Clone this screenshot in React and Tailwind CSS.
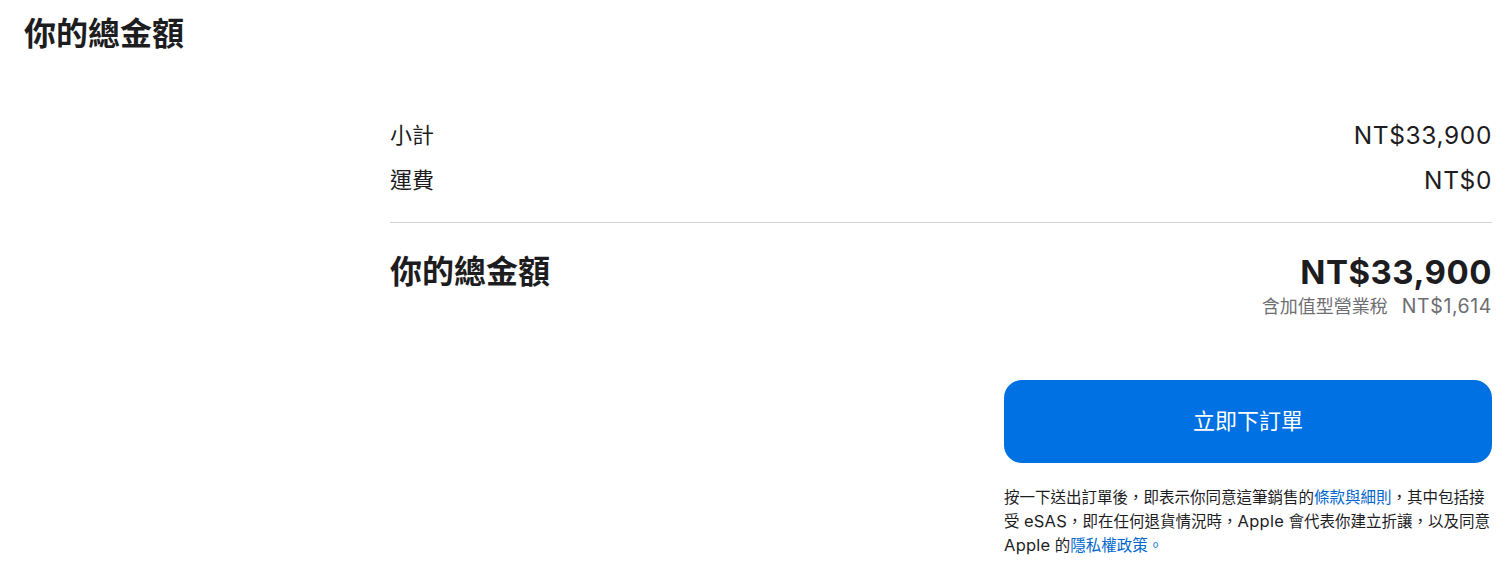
const font = "font-['Inter','Noto_Sans_CJK_TC',sans-serif]";

// Latin runs sit a little larger and looser than the CJK text around them
function Latin({ children }) {
	return (
		<span className="text-[16.5px] leading-[16px] tracking-[0.015em]">
			{children}
		</span>
	);
}

function SummaryRow({ label, value }) {
	return (
		<div className="flex items-center justify-between h-[45px]">
			<span className="text-[22px]">{label}</span>
			<span className="text-[24.5px] tracking-[0.025em]">{value}</span>
		</div>
	);
}

export default function App() {
	return (
		<div
			className={`${font} h-[568px] overflow-hidden bg-white pl-[24px] pr-[20px] text-[#1d1d1f]`}
		>
			<h2 className="pt-[14px] text-[32px] font-bold leading-[40px]">
				你的總金額
			</h2>

			<div className="grid grid-cols-[366px_1fr]">
				<div />
				<div className="mt-[59px]">
					<SummaryRow label="小計" value="NT$33,900" />
					<SummaryRow label="運費" value="NT$0" />

					<div className="mt-[19px] border-t border-[#d2d2d7]" />

					<div className="flex items-start justify-between pt-[29px]">
						<span className="text-[32px] font-bold leading-[40px]">
							你的總金額
						</span>
						<div className="flex flex-col items-end">
							<span className="text-[33px] font-bold leading-[40px] tracking-[0.015em]">
								NT$33,900
							</span>
							<span className="mt-[2px] text-[18px] leading-[24px] text-[#6e6e73]">
								含加值型營業稅
								<span className="ml-[14px] text-[19.5px] tracking-[0.03em]">
									NT$1,614
								</span>
							</span>
						</div>
					</div>

					<div className="ml-auto mt-[61px] w-[488px]">
						<button
							type="button"
							className="flex h-[83px] w-full items-center justify-center rounded-[18px] bg-[#0071e3] text-[22px] text-white"
						>
							立即下訂單
						</button>
						<p className="mt-[23px] text-[15.5px] leading-[24px] text-[#1d1d1f]">
							按一下送出訂單後，即表示你同意這筆銷售的
							<a href="#" className="text-[#0066cc]">
								條款與細則
							</a>
							，其中包括接受 <Latin>eSAS</Latin>，即在任何退貨情況時，
							<Latin>Apple</Latin> 會代表你建立折讓，以及同意{" "}
							<Latin>Apple</Latin> 的
							<a href="#" className="text-[#0066cc]">
								隱私權政策。
							</a>
						</p>
					</div>
				</div>
			</div>
		</div>
	);
}
